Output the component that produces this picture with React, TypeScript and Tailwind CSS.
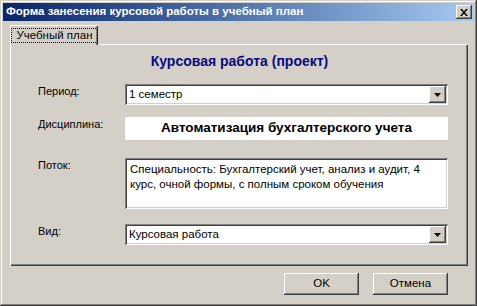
import { ReactNode } from "react";

const raised =
  "shadow-[inset_-1px_-1px_#404040,inset_1px_1px_#ffffff,inset_-2px_-2px_#808080,inset_2px_2px_#d4d0c8]";
const sunken =
  "shadow-[inset_1px_1px_#808080,inset_-1px_-1px_#ffffff,inset_2px_2px_#404040,inset_-2px_-2px_#d4d0c8]";

function ComboBox({ value }: { value: string }) {
  return (
    <div className={`flex h-[21px] w-[323px] items-center bg-white p-[2px] ${sunken}`}>
      <span className="flex-1 pl-[2px] text-[11.5px] leading-none text-black">{value}</span>
      <div className={`flex h-[17px] w-[17px] items-center justify-center bg-[#d4d0c8] ${raised}`}>
        <svg width="7" height="4" viewBox="0 0 7 4">
          <path d="M0 0h7L3.5 4z" fill="#000" />
        </svg>
      </div>
    </div>
  );
}

function Row({ label, children, className = "" }: { label: string; children: ReactNode; className?: string }) {
  return (
    <div className={`flex items-start ${className}`}>
      <div className="w-[87px] pt-[1px] text-[11px] leading-[13px] text-black">{label}</div>
      {children}
    </div>
  );
}

function Button({ children }: { children: ReactNode }) {
  return (
    <button
      className={`flex h-[22px] w-[75px] items-center justify-center bg-[#d4d0c8] text-[11.5px] text-black ${raised}`}
    >
      {children}
    </button>
  );
}

export default function App() {
  return (
    <div className="h-[306px] w-[477px] bg-[#d4d0c8] p-[3px] font-['Liberation_Sans',Arial,sans-serif] shadow-[inset_-1px_-1px_#404040,inset_1px_1px_#d4d0c8,inset_-2px_-2px_#808080,inset_2px_2px_#ffffff]">
      <div className="flex h-[18px] items-center bg-gradient-to-r from-[#0a246a] to-[#a6caf0] pl-[3px] pr-[2px]">
        <span className="flex-1 text-[11.5px] font-bold text-white">
          Форма занесения курсовой работы в учебный план
        </span>
        <div className={`flex h-[14px] w-[16px] items-center justify-center bg-[#d4d0c8] ${raised}`}>
          <svg width="8" height="7" viewBox="0 0 8 7">
            <path d="M0 0h2l2 2.5L6 0h2L5 3.5 8 7H6L4 4.5 2 7H0l3-3.5z" fill="#000" />
          </svg>
        </div>
      </div>

      <div className="mt-[4px] pl-[7px] pr-[6px]">
        <div className="flex">
          <div className="flex h-[20px] w-[88px] items-center justify-center border-l border-t border-white shadow-[inset_-1px_0_#404040,inset_-2px_0_#808080]">
            <span className="border border-dotted border-black px-[4px] text-[11.5px] leading-[13px] text-black">
              Учебный план
            </span>
          </div>
          <div className="flex-1 self-end border-b border-white" />
        </div>

        <div className="flex h-[221px] flex-col border-l border-white shadow-[inset_-1px_-1px_#404040,inset_-2px_-2px_#808080]">
          <div className="mt-[9px] text-center text-[14px] font-bold leading-[15px] text-[#0a0a80]">
            Курсовая работа (проект)
          </div>

          <div className="ml-[27px] mt-[15px] flex flex-col">
            <Row label="Период:">
              <ComboBox value="1 семестр" />
            </Row>
            <Row label="Дисциплина:" className="mt-[12px]">
              <div className="flex h-[23px] w-[323px] items-center justify-center bg-white text-[13.5px] font-bold text-black">
                Автоматизация бухгалтерского учета
              </div>
            </Row>
            <Row label="Поток:" className="mt-[18px]">
              <div className={`h-[51px] w-[323px] bg-white py-[4px] pl-[5px] pr-[8px] text-[11.5px] leading-[15px] text-black ${sunken}`}>
                Специальность: Бухгалтерский учет, анализ и аудит, 4 курс, очной формы, с полным сроком обучения
              </div>
            </Row>
            <Row label="Вид:" className="mt-[15px]">
              <ComboBox value="Курсовая работа" />
            </Row>
          </div>
        </div>

        <div className="mr-[20px] mt-[7px] flex justify-end gap-[14px]">
          <Button>OK</Button>
          <Button>Отмена</Button>
        </div>
      </div>
    </div>
  );
}
